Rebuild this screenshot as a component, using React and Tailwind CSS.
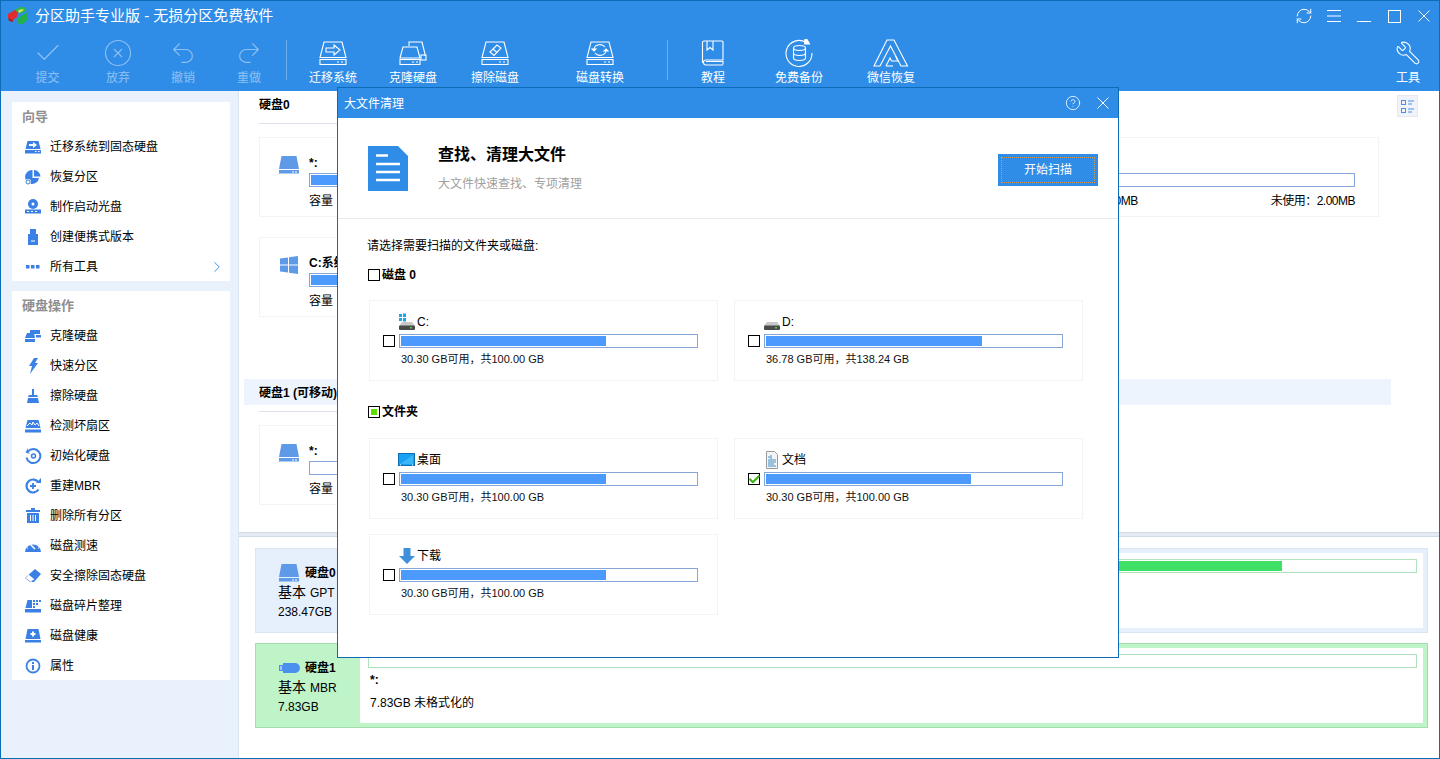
import { Check, CircleX, Undo2, Redo2, Wrench, RefreshCw, CircleHelp, ChevronRight } from 'lucide-react';

// toolbar icons
const DiskLine = ({ children }) => (
  <svg width="28" height="24" viewBox="0 0 28 24" fill="none" stroke="white" strokeWidth="1.1">
    <path d="M5 1h18l4 15.5H1z" />
    <rect x="1" y="18.5" width="26" height="5" />
    <path d="M18 21h2M22 21h2" />
    {children}
  </svg>
);

const MigrateIcon = () => (
  <DiskLine>
    <path d="M7 7h8V4l6 5-6 5v-3H7z" />
  </DiskLine>
);

const CloneIcon = () => (
  <svg width="28" height="24" viewBox="0 0 28 24" fill="none" stroke="white" strokeWidth="1.1">
    <path d="M10 5V1h13l3 12v2" />
    <path d="M4 6h14l3 11H1z" />
    <rect x="1" y="18.5" width="20" height="5" />
    <rect x="22" y="14" width="5" height="5" />
    <path d="M13 21h2M17 21h2" />
  </svg>
);

const EraseIcon = () => (
  <DiskLine>
    <path d="M9 11l7-7 4 3-7 7.500z" />
    <path d="M12 8l4 3.500" />
  </DiskLine>
);

const ConvertIcon = () => (
  <DiskLine>
    <path d="M8 8a6 5 0 0 1 11-2" />
    <path d="M20 10a6 5 0 0 1-11 2" />
    <path d="M6 8h4l-2 2zM18 10h4l-2-2z" fill="white" />
  </DiskLine>
);

const BookIcon = () => (
  <svg width="24" height="26" viewBox="0 0 24 26" fill="none" stroke="white" strokeWidth="1.1">
    <path d="M3 1h18a1 1 0 0 1 1 1v18H5a2 2 0 0 0 0 5h17M1.500 23V2.500A1.500 1.500 0 0 1 3 1" />
    <path d="M5 21.500h17v3" />
    <path d="M6 1v9l3-2.500 3 2.500V1" />
  </svg>
);

const BackupIcon = () => (
  <svg width="28" height="28" viewBox="0 0 28 28" fill="none" stroke="white" strokeWidth="1.1">
    <path d="M21 3.500A13 13 0 1 0 27 14" />
    <path d="M20 0l2 .5 2.500 4.500h-5z" fill="white" />
    <ellipse cx="14.500" cy="9" rx="6" ry="2.500" />
    <path d="M8.500 9v10c0 1.500 2.700 2.500 6 2.500s6-1 6-2.500V9M8.500 14c0 1.500 2.700 2.500 6 2.500s6-1 6-2.500" />
  </svg>
);

const AIcon = () => (
  <svg width="36" height="28" viewBox="0 0 36 28" fill="none" stroke="white" strokeWidth="1.1">
    <path d="M14 1h7l13.500 26H28L17.500 7 7 27H1z" />
    <path d="M13 27l4-8 1.500 3H25l-2.500-5" />
    <path d="M13 27h7" />
  </svg>
);

const Logo = () => (
  <svg width="22" height="20" viewBox="0 0 22 20">
    <path d="M1 8l7-4 3 1-1 6-4 3-5-2z" fill="#e22b2b" />
    <path d="M8 3.500 13 1h4l3 3-6 4-4-2z" fill="#2fb550" />
    <path d="M11 4.500l4-1.500 2 1-5 3z" fill="#d8e850" />
    <path d="M11 12l10-6v7l-5 5h-4l-2-3z" fill="#22b04a" />
    <path d="M1 12l5 2v2l-4-1z" fill="#b01c1c" />
  </svg>
);

// sidebar icons, all 18x18
const Side = ({ children }) => (
  <svg width="18" height="18" viewBox="0 0 18 18" fill="#3b80e4">
    {children}
  </svg>
);

const sideBase = (
  <>
    <path d="M3.500 3h11l2 8h-15z" />
    <rect x="1" y="12" width="16" height="3.500" />
    <path d="M11 13.500h1.500M14 13.500h1.500" stroke="white" />
  </>
);

const sideIcons = {
  migrate: (
    <Side>
      {sideBase}
      <path d="M5 6h4V4l4 3-4 3V8H5z" fill="white" />
    </Side>
  ),
  restore: (
    <Side>
      <path d="M10 2a7 7 0 0 1 6.500 6.500H10z" />
      <path d="M8.500 2v8l6.500 0a7 7 0 1 1-6.500-8z" />
      <circle cx="4" cy="14" r="3" fill="white" />
      <circle cx="4" cy="14" r="2" fill="none" stroke="#3b80e4" />
    </Side>
  ),
  boot: (
    <Side>
      <circle cx="9" cy="6" r="5" />
      <circle cx="9" cy="6" r="1.500" fill="white" />
      <rect x="1" y="11.500" width="16" height="4" />
      <path d="M3 13.500h2M7 13.500h2M11 13.500h2" stroke="white" />
    </Side>
  ),
  usb: (
    <Side>
      <path d="M6 1h6v5h2v11H4V6h2z" />
      <path d="M7 13h4" stroke="white" />
    </Side>
  ),
  dots: (
    <Side>
      <rect x="2" y="7" width="3.500" height="3.500" />
      <rect x="7" y="7" width="3.500" height="3.500" />
      <rect x="12" y="7" width="3.500" height="3.500" />
    </Side>
  ),
  clone: (
    <Side>
      <path d="M6 3h10v4H6z" />
      <path d="M3 6h7l1 5H1z" />
      <rect x="1" y="12" width="10" height="3" />
      <rect x="12" y="8" width="5" height="2.500" />
    </Side>
  ),
  bolt: (
    <Side>
      <path d="M10 1h4l-3 5h3l-8 11 2-8H5z" />
    </Side>
  ),
  broom: (
    <Side>
      <rect x="8" y="2" width="2" height="6" />
      <path d="M5 8h8l1 2H4z" />
      <path d="M4 11h10l1 5H3z" />
    </Side>
  ),
  check: (
    <Side>
      <path d="M3.500 3h11l2 8h-15z" />
      <rect x="1" y="12.500" width="16" height="3" />
      <path d="M3 9l3-3 2 2 1-3 2 3 2-2 2 3" fill="none" stroke="white" />
    </Side>
  ),
  init: (
    <Side>
      <path d="M4 4.500V1L1.500 5.500 6 7z" />
      <path d="M4 4.500a7 7 0 1 1-1.500 6" fill="none" stroke="#3b80e4" strokeWidth="2" />
      <circle cx="9.500" cy="9" r="2" fill="none" stroke="#3b80e4" strokeWidth="1.500" />
    </Side>
  ),
  rebuild: (
    <Side>
      <path d="M14.500 12.500a6.500 6.500 0 1 1 0-7" fill="none" stroke="#3b80e4" strokeWidth="2.200" />
      <path d="M12 6h5V1z" />
      <path d="M6 9h6M9 6v6" stroke="#3b80e4" strokeWidth="1.800" />
    </Side>
  ),
  trash: (
    <Side>
      <path d="M7 1h4v2h5v2H2V3h5z" />
      <path d="M3 6h12v10H3z" />
      <path d="M6.500 8v6M9 8v6M11.500 8v6" stroke="white" />
    </Side>
  ),
  gauge: (
    <Side>
      <path d="M1 15a8 7.500 0 1 1 16 0z" />
      <path d="M6 7l5 5" stroke="white" strokeWidth="1.500" />
      <path d="M3 11h1M14 11h1M9 5v1" stroke="white" />
    </Side>
  ),
  eraser: (
    <Side>
      <path d="M11 2l6 5-7 8-4 0-5-4z" />
      <path d="M4 8l6 5" stroke="white" />
      <path d="M1.500 11L5 8l5 4-3 3z" fill="white" />
    </Side>
  ),
  frag: (
    <Side>
      <path d="M3.500 3H8v8H1.500z" />
      <rect x="1" y="12" width="16" height="3.500" />
      <path d="M9 3h2v2H9zM12 3h2v2h-2zM15 3h2v2h-2zM9 6h2v2H9zM12 6h2v2h-2zM9 9h2v2H9z" />
    </Side>
  ),
  health: (
    <Side>
      <path d="M3.500 2h11l2 10h-15z" />
      <rect x="1" y="13" width="16" height="2.500" />
      <path d="M9 4.500v5M6.500 7h5" stroke="white" strokeWidth="2" />
    </Side>
  ),
  info: (
    <Side>
      <circle cx="9" cy="9" r="6.500" fill="none" stroke="#3b80e4" strokeWidth="1.800" />
      <rect x="8" y="8" width="2" height="5" />
      <rect x="8" y="5" width="2" height="2" />
    </Side>
  ),
};

const DiskSolid = () => (
  <svg width="22" height="20" viewBox="0 0 22 20">
    <path d="M3.500 1h15L21 14H1z" fill="#5f9ae8" />
    <rect x="1" y="15" width="20" height="3.500" fill="#5f9ae8" />
    <path d="M14 17h2M17 17h2" stroke="white" />
  </svg>
);

const WinLogo = () => (
  <svg width="22" height="20" viewBox="0 0 22 20" fill="#5f9ae8">
    <path d="M2 3.500l8-1v7H2zM11 2.300 20 1v8.500h-9zM2 10.500h8v7l-8-1zM11 10.500h9V19l-9-1.300z" />
  </svg>
);

const FileDoc = () => (
  <svg width="40" height="45" viewBox="0 0 40 45">
    <path d="M0 0h30l10 10v35H0z" fill="#2f8de8" />
    <path d="M8 9.500h12M8 18h24M8 26h24M8 34h24" stroke="white" strokeWidth="2.500" />
  </svg>
);

const HddSmall = ({ win }) => (
  <svg width="18" height="18" viewBox="0 0 18 18">
    {win && <path d="M1 1h3v3H1zM5 .500h3v3.500H5zM1 5h3v3H1zM5 5h3v3.500H5z" fill="#18a8f0" />}
    <path d="M4 9h10l3 4H1z" fill="#c8c8c8" />
    <rect x="1" y="12.500" width="16" height="4.500" rx="1" fill="#4a4a4a" />
    <rect x="12" y="14" width="2" height="1.500" fill="#43d04a" />
  </svg>
);

const DesktopIcon = () => (
  <svg width="18" height="18" viewBox="0 0 18 18">
    <rect x=".5" y="2.500" width="16" height="12" fill="#18a0f5" stroke="#0c70b0" />
    <path d="M2 13 15 4v9z" fill="#3cb4f8" />
    <path d="M2 14h1M14 14h1" stroke="white" />
  </svg>
);

const DocSmall = () => (
  <svg width="18" height="18" viewBox="0 0 18 18" fill="none">
    <path d="M3.500 .500h8l3 3v14h-11z" fill="#f4f4f4" stroke="#9a9a9a" />
    <path d="M5 6h2M8 4v4M5 9h8M5 11h8M5 13h6M5 15h8" stroke="#3f8fc8" />
  </svg>
);

const DownIcon = () => (
  <svg width="18" height="18" viewBox="0 0 18 18">
    <path d="M5.500 1h7v8H17l-8 8-8-8h4.500z" fill="#3f8fdc" />
  </svg>
);

const UsbDisk = () => (
  <svg width="22" height="12" viewBox="0 0 22 12">
    <path d="M1 3h4V1h12a5 5 0 0 1 0 10H5V9H1z" fill="#4a90ee" />
    <path d="M2 5h2M2 7h2" stroke="white" />
  </svg>
);

const CloseLine = ({ size }) => (
  <svg width={size} height={size} viewBox="0 0 12 12" stroke="white" strokeWidth="1">
    <path d="M.5 .5l11 11M11.500 .5l-11 11" />
  </svg>
);

const tools = [
  { w: 'w-[93px]', label: '提交', dim: true, icon: <Check size={30} strokeWidth={1} /> },
  { w: 'w-[48px]', label: '放弃', dim: true, icon: <CircleX size={30} strokeWidth={0.9} /> },
  { w: 'w-[82px]', label: '撤销', dim: true, icon: <Undo2 size={28} strokeWidth={1} /> },
  { w: 'w-[50px]', label: '重做', dim: true, icon: <Redo2 size={28} strokeWidth={1} /> },
  { divider: 'ml-[12px]' },
  { w: 'w-[92px]', label: '迁移系统', icon: <MigrateIcon /> },
  { w: 'w-[68px]', label: '克隆硬盘', icon: <CloneIcon /> },
  { w: 'w-[96px]', label: '擦除磁盘', icon: <EraseIcon /> },
  { w: 'w-[114px]', label: '磁盘转换', icon: <ConvertIcon /> },
  { divider: 'ml-[10px]' },
  { w: 'w-[90px]', label: '教程', icon: <BookIcon /> },
  { w: 'w-[82px]', label: '免费备份', icon: <BackupIcon /> },
  { w: 'w-[102px]', label: '微信恢复', icon: <AIcon /> },
];

const guide = [
  ['migrate', '迁移系统到固态硬盘'],
  ['restore', '恢复分区'],
  ['boot', '制作启动光盘'],
  ['usb', '创建便携式版本'],
  ['dots', '所有工具'],
];

const diskOps = [
  ['clone', '克隆硬盘'],
  ['bolt', '快速分区'],
  ['broom', '擦除硬盘'],
  ['check', '检测坏扇区'],
  ['init', '初始化硬盘'],
  ['rebuild', '重建MBR'],
  ['trash', '删除所有分区'],
  ['gauge', '磁盘测速'],
  ['eraser', '安全擦除固态硬盘'],
  ['frag', '磁盘碎片整理'],
  ['health', '磁盘健康'],
  ['info', '属性'],
];

function SideRow({ icon, text, arrow }) {
  return (
    <div className="flex items-center h-[30px] pt-[2px] pl-[12px] pr-[4px] text-[12px] text-black">
      <span className="w-[26px] shrink-0">{sideIcons[icon]}</span>
      <span className="flex-1">{text}</span>
      {arrow && <ChevronRight size={18} strokeWidth={1.3} className="text-[#3d8ff0]" />}
    </div>
  );
}

function PartCard({ icon, name, fill, className }) {
  return (
    <div className={`flex h-[80px] border border-[#f1f3f6] pl-[18px] ${className}`}>
      <div className="w-[31px] shrink-0 pt-[17px]">{icon}</div>
      <div className="flex-1 pt-[16px] pr-[23px]">
        <div className="h-[16px] leading-[18px] text-[12px] font-bold">{name}</div>
        <div className="mt-[3px] h-[14px] border border-[#85a6d9] p-px">
          {fill && <div className="h-full w-[60px] bg-[#4d9aff]"></div>}
        </div>
        <div className="mt-[5px] h-[16px] leading-[18px] text-[12px]">容量</div>
      </div>
    </div>
  );
}

function ScanCard({ icon, label, free, total, pct, checked }) {
  return (
    <div className="h-[81px] border border-[#f1f3f6] pl-[13px] pr-[19px] pt-[8px] grid grid-cols-[12px_1fr] gap-x-[4px] grid-rows-[25px_14px_21px]">
      <div></div>
      <div className="flex items-center gap-px -ml-px text-[12px]">
        <span className="w-[18px] shrink-0">{icon}</span>
        <span>{label}</span>
      </div>
      <div className="relative w-[12px] h-[12px] mt-px border border-black bg-white">
        {checked && <Check size={13} strokeWidth={4} className="absolute -top-[1px] -left-[1px] text-[#3cb317]" />}
      </div>
      <div className="border border-[#85a6d9] p-px">
        <div className="h-full bg-[#4d9aff]" style={{ width: `${pct}%` }}></div>
      </div>
      <div></div>
      <div className="pl-[2px] leading-[23px] text-[11px] text-[#111]">
        {free} GB可用，共{total} GB
      </div>
    </div>
  );
}

function DiskCard({ icon, name, kind, size, border, bg, children }) {
  return (
    <div className={`flex h-[85px] w-[1173px] border py-[4px] pr-[4px] ${border} ${bg}`}>
      <div className="w-[104px] shrink-0 pl-[22px] pt-[10px]">
        <div className="flex items-center h-[20px] text-[12px] font-bold">
          <span className="w-[27px] shrink-0">{icon}</span>
          {name}
        </div>
        <div className="h-[19px] leading-[19px] text-[14px]">
          基本 <span className="text-[12px]">{kind}</span>
        </div>
        <div className="h-[18px] leading-[20px] text-[12px]">{size}</div>
      </div>
      <div className="flex-1 bg-white pl-[8px] pr-[6px] pt-[6px] text-[12px]">{children}</div>
    </div>
  );
}

export default function App() {
  return (
    <div className="relative w-[1440px] h-[759px] overflow-hidden flex flex-col border border-[#0d6cb8] bg-white text-black font-['Liberation_Sans','Noto_Sans_CJK_SC',sans-serif]">
      <header className="bg-[#2f8de8] text-white shrink-0">
        <div className="flex items-center h-[30px] pl-[6px]">
          <Logo />
          <span className="ml-[6px] text-[15px]">分区助手专业版 - 无损分区免费软件</span>
          <div className="ml-auto flex items-center text-white">
            <span className="w-[30px] flex justify-center">
              <RefreshCw size={18} strokeWidth={1.3} />
            </span>
            <span className="w-[30px] flex justify-center">
              <svg width="14" height="14" viewBox="0 0 14 14" stroke="white" strokeWidth="1">
                <path d="M0 1.500h14M0 7h14M0 12.500h14" />
              </svg>
            </span>
            <span className="w-[30px] flex justify-center">
              <svg width="14" height="14" viewBox="0 0 14 14" stroke="white" strokeWidth="1">
                <path d="M0 12.500h14" />
              </svg>
            </span>
            <span className="w-[30px] flex justify-center">
              <svg width="13" height="13" viewBox="0 0 13 13" fill="none" stroke="white" strokeWidth="1">
                <rect x=".5" y=".5" width="12" height="12" />
              </svg>
            </span>
            <span className="w-[30px] flex justify-center">
              <CloseLine size={12} />
            </span>
          </div>
        </div>
        <div className="flex h-[60px]">
          {tools.map((t, i) =>
            t.divider ? (
              <div key={i} className={`${t.divider} mt-[9px] w-px h-[40px] bg-white/30`}></div>
            ) : (
              <div key={i} className={`${t.w} flex flex-col items-center pt-[8px] ${t.dim ? 'opacity-45' : ''}`}>
                <div className="h-[27px] flex items-center justify-center">{t.icon}</div>
                <div className="mt-[4px] h-[16px] leading-[16px] text-[12px] whitespace-nowrap">{t.label}</div>
              </div>
            )
          )}
          <div className="ml-auto w-[62px] flex flex-col items-center pt-[8px]">
            <div className="h-[27px] flex items-center justify-center">
              <Wrench size={26} strokeWidth={1} className="-scale-x-100" />
            </div>
            <div className="mt-[4px] h-[16px] leading-[16px] text-[12px]">工具</div>
          </div>
        </div>
      </header>

      <div className="flex flex-1 min-h-0">
        <aside className="w-[238px] shrink-0 bg-[#e9f1fd] border-r border-[#d9e4f2] pl-[11px] pr-[8px] pt-[11px]">
          <div className="bg-white">
            <div className="h-[29px] leading-[29px] pl-[10px] text-[13px] font-bold text-[#8f8f8f]">向导</div>
            {guide.map(([icon, text], i) => (
              <SideRow key={icon} icon={icon} text={text} arrow={i === 4} />
            ))}
          </div>
          <div className="mt-[10px] bg-white">
            <div className="h-[29px] leading-[29px] pl-[10px] text-[13px] font-bold text-[#8f8f8f]">硬盘操作</div>
            {diskOps.map(([icon, text]) => (
              <SideRow key={icon} icon={icon} text={text} />
            ))}
          </div>
        </aside>

        <main className="relative flex-1 min-w-0 flex flex-col">
          <div className="absolute top-[4px] right-[21px] w-[21px] h-[22px] bg-[#f0f3f9] border border-[#e4e9f2] flex items-center justify-center">
            <svg width="15" height="15" viewBox="0 0 15 15" fill="none" stroke="#4a90ee">
              <rect x="1.500" y="1.500" width="4" height="4" />
              <rect x="1.500" y="9.500" width="4" height="4" />
              <path d="M8 2h6M8 5h4M8 10h6M8 13h4" />
            </svg>
          </div>

          <div className="h-[441px] shrink-0 overflow-hidden pl-[20px]">
            <div className="pt-[6px] h-[21px] leading-[16px] text-[12px] font-bold">硬盘0</div>
            <div className="mt-[11px] h-px w-[700px] bg-[#dbe1ea]"></div>
            <div className="mt-[13px] relative w-[1120px]">
              <PartCard icon={<DiskSolid />} name="*:" fill className="w-[1120px]" />
              <div className="absolute left-[50px] right-[24px] top-[55px] flex justify-end text-[12px] leading-[18px] tracking-[-0.5px]">
                <span className="mr-[133px]">已使用：98.00MB</span>
                <span>未使用：2.00MB</span>
              </div>
            </div>
            <PartCard icon={<WinLogo />} name="C:系统" fill className="w-[700px] mt-[20px]" />
            <div className="mt-[62px] -ml-[15px] w-[1147px] h-[26px] pl-[15px] leading-[28px] bg-[#edf4fd] text-[12px] font-bold">
              硬盘1 (可移动)
            </div>
            <div className="mt-[6px] h-px w-[700px] bg-[#dbe1ea]"></div>
            <PartCard icon={<DiskSolid />} name="*:" className="w-[700px] mt-[13px]" />
          </div>

          <div className="h-[5px] shrink-0 bg-[#e6ebf3] border-y border-[#cfdbe8]"></div>

          <div className="flex-1 pl-[16px] pt-[11px]">
            <DiskCard icon={<DiskSolid />} name="硬盘0" kind="GPT" size="238.47GB" border="border-[#d9e5f5]" bg="bg-[#e6effc]">
              <div className="h-[14px] border border-[#b0e2bb] p-px">
                <div className="h-full w-[912px] bg-[#3ee066]"></div>
              </div>
            </DiskCard>
            <DiskCard icon={<UsbDisk />} name="硬盘1" kind="MBR" size="7.83GB" border="border-[#a4dcae] mt-[10px]" bg="bg-[#bff3c8]">
              <div className="h-[14px] border border-[#b0e2bb]"></div>
              <div className="mt-[4px] pl-[2px] h-[16px] leading-[16px] font-bold">*:</div>
              <div className="mt-[6px] pl-[2px] h-[16px] leading-[18px]">7.83GB 未格式化的</div>
            </DiskCard>
          </div>
        </main>
      </div>

      {/* dialog sits over the main window */}
      <div className="absolute left-[336px] top-[86px] w-[782px] h-[571px] bg-white border border-[#0d6cb8] flex flex-col">
        <div className="flex items-center h-[30px] shrink-0 bg-[#2f8de8] text-white pl-[6px] pr-[9px]">
          <span className="h-[16px] leading-[18px] text-[12px]">大文件清理</span>
          <CircleHelp size={16} strokeWidth={1.2} className="ml-auto" />
          <span className="ml-[16px]">
            <CloseLine size={12} />
          </span>
        </div>
        <div className="flex h-[101px] shrink-0 border-b border-[#e5e9f0] pl-[30px] pr-[20px]">
          <div className="mt-[28px]">
            <FileDoc />
          </div>
          <div className="ml-[30px] mt-[26px]">
            <div className="text-[16px] leading-[22px] font-bold">查找、清理大文件</div>
            <div className="mt-[10px] text-[12px] leading-[16px] text-[#a0a0a0]">大文件快速查找、专项清理</div>
          </div>
          <div className="ml-auto mt-[36px] w-[100px] h-[32px] bg-[#2f8de8] p-[3px]">
            <div className="h-full border border-dotted border-[#d99a50] flex items-center justify-center text-[12px] text-white">
              开始扫描
            </div>
          </div>
        </div>
        <div className="pl-[30px] pt-[19px]">
          <div className="-ml-px h-[16px] leading-[16px] text-[12px]">请选择需要扫描的文件夹或磁盘:</div>
          <div className="mt-[13px] flex items-center h-[16px] text-[12px] font-bold">
            <span className="w-[12px] h-[12px] border border-black mr-[2px]"></span>
            磁盘 0
          </div>
          <div className="mt-[17px] ml-px grid grid-cols-[349px_349px] gap-x-[16px]">
            <ScanCard icon={<HddSmall win />} label="C:" free="30.30" total="100.00" pct={69.5} />
            <ScanCard icon={<HddSmall />} label="D:" free="36.78" total="138.24" pct={73.2} />
          </div>
          <div className="mt-[23px] flex items-center h-[16px] text-[12px] font-bold">
            <span className="w-[12px] h-[12px] border border-black p-[2px] mr-[2px]">
              <span className="block w-full h-full bg-[#5fdc00]"></span>
            </span>
            文件夹
          </div>
          <div className="mt-[18px] ml-px grid grid-cols-[349px_349px] gap-x-[16px] gap-y-[15px]">
            <ScanCard icon={<DesktopIcon />} label="桌面" free="30.30" total="100.00" pct={69.5} />
            <ScanCard icon={<DocSmall />} label="文档" free="30.30" total="100.00" pct={69.5} checked />
            <ScanCard icon={<DownIcon />} label="下载" free="30.30" total="100.00" pct={69.5} />
          </div>
        </div>
      </div>
    </div>
  );
}
